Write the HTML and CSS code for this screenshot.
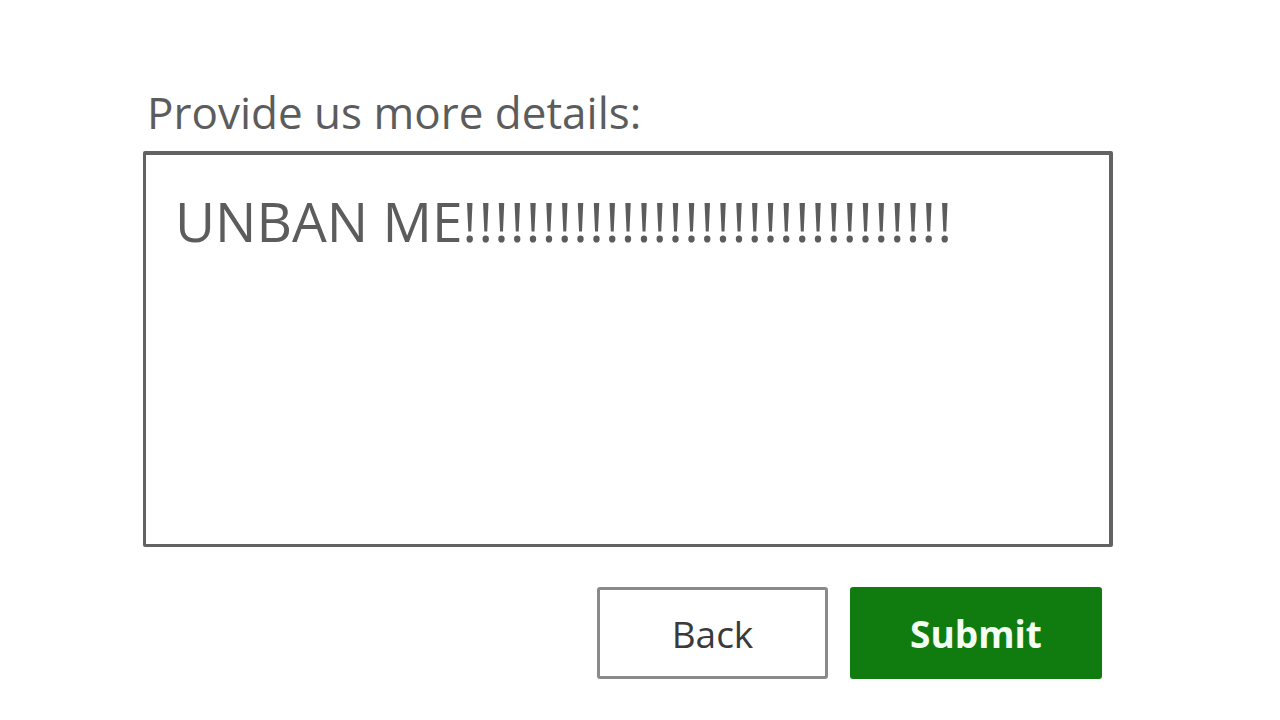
FILE: index.html
```html
<!DOCTYPE html>
<html>
<head>
<meta charset="utf-8">
<link rel="stylesheet" href="styles.css">
</head>
<body>
<main class="form">
  <label class="label" for="details">Provide us more details:</label>
  <div class="field" id="details">UNBAN ME<span class="bangs">!!!!!!!!!!!!!!!!!!!!!!!!!!!!!!!</span></div>
  <div class="actions">
    <button class="btn btn-back">Back</button>
    <button class="btn btn-submit">Submit</button>
  </div>
</main>
</body>
</html>
```
FILE: styles.css
```css
html, body {
  margin: 0;
  padding: 0;
  background: #ffffff;
}
body {
  width: 1280px;
  height: 720px;
  overflow: hidden;
  font-family: "Open Sans", "Noto Sans", sans-serif;
}
.form {
  display: flex;
  flex-direction: column;
  padding: 82px 0 0 143px;
  width: 970px;
}
.label {
  display: block;
  font-size: 44px;
  line-height: 60px;
  color: #5c5c5c;
  padding-left: 4px;
  margin-bottom: 9px;
}
.field {
  box-sizing: border-box;
  height: 396px;
  border-style: solid;
  border-color: #626262;
  border-width: 4px 4px 3px 3px;
  border-radius: 2px;
  padding: 26px 0 0 29px;
  font-size: 55px;
  line-height: 80px;
  color: #5c5c5c;
}
.bangs {
  letter-spacing: 1.3px;
}
.actions {
  display: flex;
  justify-content: flex-end;
  gap: 22px;
  margin-top: 40px;
  padding-right: 11px;
}
.btn {
  box-sizing: border-box;
  height: 92px;
  font-family: "Open Sans", "Noto Sans", sans-serif;
  font-size: 37px;
  border-radius: 3px;
  cursor: pointer;
}
.btn-back {
  width: 231px;
  background: #ffffff;
  border: 3px solid #8a8a8a;
  color: #3a3a3a;
}
.btn-submit {
  width: 252px;
  background: #107c10;
  border: none;
  color: #f4fff4;
  font-weight: 700;
}
```
